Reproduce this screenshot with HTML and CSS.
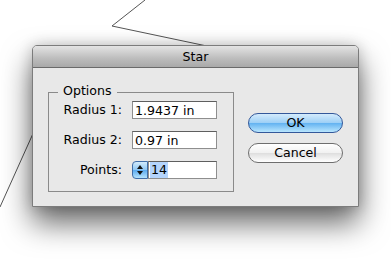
FILE: index.html
```html
<!DOCTYPE html>
<html lang="en">
<head>
  <meta charset="UTF-8">
  <meta name="viewport" content="width=device-width, initial-scale=1.0">
  <title>Star</title>
  <link rel="stylesheet" href="styles.css">
</head>
<body>
  <svg class="star-lines" width="391" height="271" viewBox="0 0 391 271">
    <polyline points="145,0 112,26 240,53" />
    <polyline points="0,207 40,118" />
  </svg>
  <div class="dialog">
    <div class="titlebar">Star</div>
    <div class="dialog-body">
      <div class="group">
        <span class="group-title">Options</span>
        <div class="form-grid">
          <label for="radius1">Radius 1:</label>
          <input type="text" id="radius1" class="field" value="1.9437 in">
          <label for="radius2">Radius 2:</label>
          <input type="text" id="radius2" class="field" value="0.97 in">
          <label for="points">Points:</label>
          <div class="spin-field">
            <span class="spinner">
              <svg width="16" height="18" viewBox="0 0 16 18">
                <path d="M5 8 L8 4 L11 8 Z" />
                <path d="M5 10 L8 14 L11 10 Z" />
              </svg>
            </span>
            <span class="field field-points" id="points"><span class="selected">14</span></span>
          </div>
        </div>
      </div>
      <div class="buttons">
        <button class="btn btn-ok">OK</button>
        <button class="btn">Cancel</button>
      </div>
    </div>
  </div>
</body>
</html>
```

FILE: styles.css
```css
body { margin: 0; width: 391px; height: 271px; background: #fff; font-family: "DejaVu Sans", sans-serif; font-size: 12.6px; color: #000; position: relative; overflow: hidden; }
.star-lines { position: absolute; left: 0; top: 0; }
.star-lines polyline { fill: none; stroke: #555; stroke-width: 1; }

.dialog { position: relative; z-index: 1; margin: 45px 0 0 32px; width: 327px; height: 162px; box-sizing: border-box; border: 1px solid #7c7c7c; border-radius: 5px 5px 0 0; background: #e8e8e8; box-shadow: 0 16px 30px rgba(0,0,0,0.6), 0 0 14px rgba(0,0,0,0.18); display: flex; flex-direction: column; }
.titlebar { height: 21px; border-bottom: 1px solid #6a6a6a; border-radius: 4px 4px 0 0; background: linear-gradient(#e4e4e4, #bcbcbc 60%, #a9a9a9); text-align: center; line-height: 21px; }

.dialog-body { display: flex; padding: 24px 0 0 15px; gap: 14px; }
.group { position: relative; width: 186px; height: 100px; box-sizing: border-box; border: 1px solid #8a8a8a; }
.group-title { position: absolute; left: 9px; top: -9px; padding: 0 5px; background: #e8e8e8; line-height: 14px; }

.form-grid { display: grid; grid-template-columns: 73px 85px; column-gap: 10px; row-gap: 12px; padding-top: 8px; }
.form-grid label { text-align: right; line-height: 18px; }
.field { box-sizing: border-box; width: 85px; height: 18px; margin: 0; padding: 0 2px; border: 1px solid #8e8e8e; border-top-color: #5e5e5e; background: #fff; font: inherit; line-height: 16px; color: #000; }

.spin-field { display: flex; height: 18px; }
.spinner { width: 16px; height: 18px; box-sizing: border-box; border: 1px solid #3f6da8; border-radius: 4px 0 0 4px; background: linear-gradient(#d2ebfc, #8cc6f4 50%, #5aaaf0 51%, #b5e3fd); }
.spinner svg { display: block; margin: -1px 0 0 -1px; }
.spinner path { fill: #111; }
.field-points { width: 69px; display: block; padding-left: 1px; }
.selected { background: #b4d4fc; display: inline-block; padding: 0 1px; }

.buttons { display: flex; flex-direction: column; gap: 10px; padding-top: 21px; }
.btn { width: 95px; height: 20px; padding: 0; border: 1px solid #6e6e6e; border-radius: 10px; background: linear-gradient(#ffffff, #f1f1f1 50%, #dedede 51%, #ffffff); font: inherit; color: #000; line-height: 18px; }
.btn-ok { border-color: #34589a; background: linear-gradient(#d4ebfc, #9ccff6 50%, #62b2f1 51%, #b9e6fe); }
```
